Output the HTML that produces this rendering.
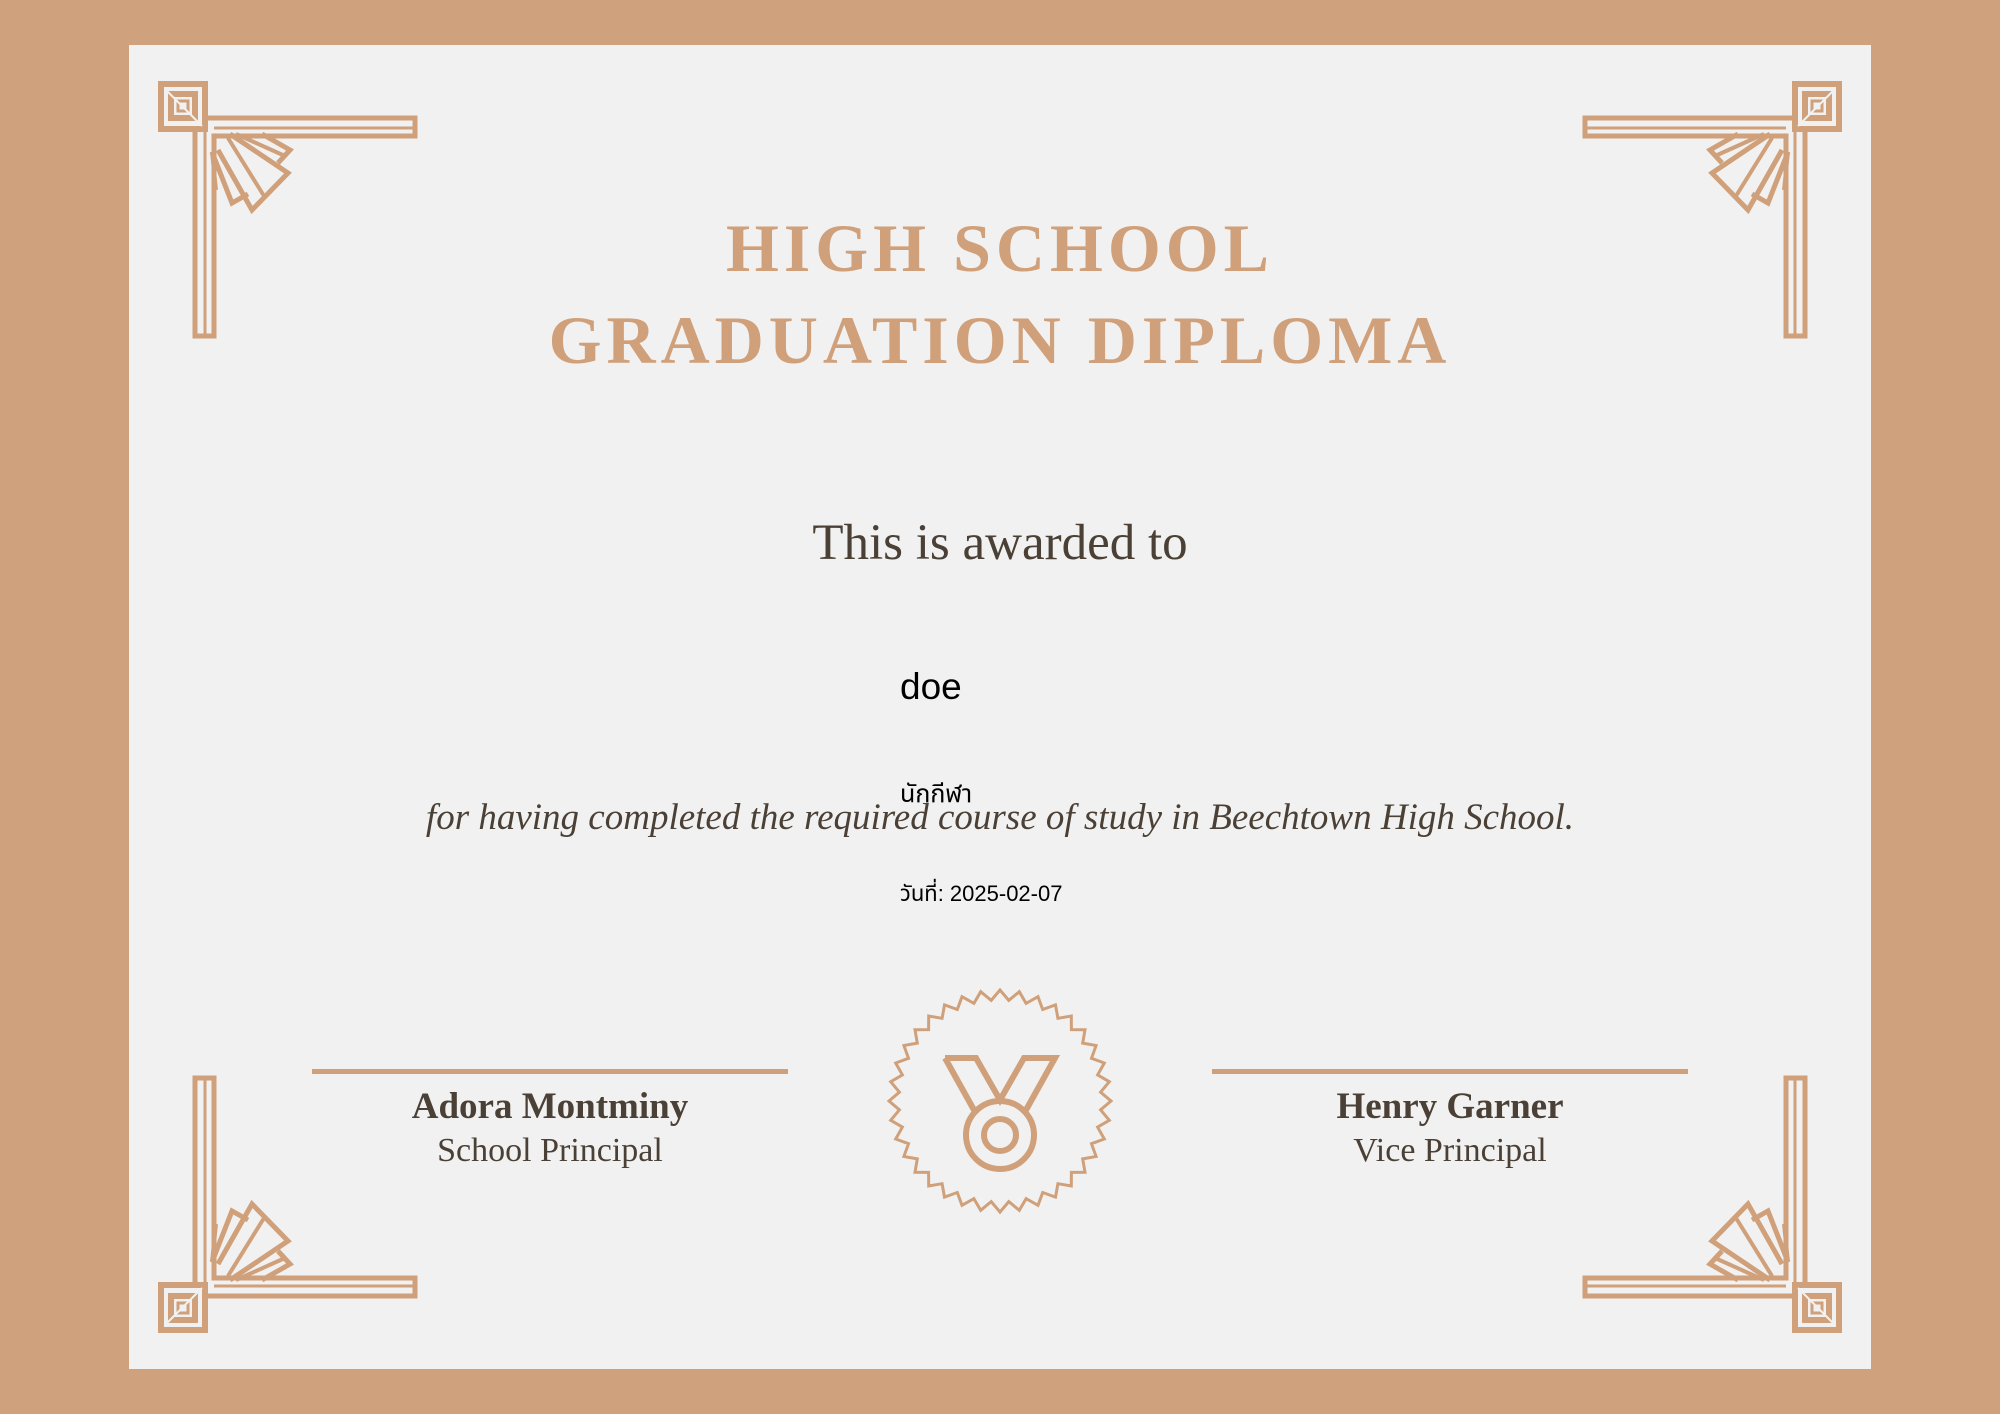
<!DOCTYPE html>
<html><head><meta charset="utf-8"><style>
body{margin:0;width:2000px;height:1414px;background:#cfa27d;position:relative;overflow:hidden;}
.panel{position:absolute;left:129px;top:45px;width:1742px;height:1324px;background:#f1f1f1;}
.t{position:absolute;left:0;width:2000px;text-align:center;white-space:nowrap;}
.serif{font-family:"Liberation Serif",serif;}
.title{color:#cfa07a;font-weight:bold;font-size:68px;letter-spacing:5px;line-height:92px;top:202px;}
.dark{color:#4a4036;}
.a{position:absolute;white-space:nowrap;font-family:"Liberation Sans","Noto Sans Thai",sans-serif;color:#000;}
</style></head><body>
<div class="panel"></div>
<svg width="2000" height="1414" style="position:absolute;left:0;top:0">
<defs>
<g id="c" fill="none" stroke="#cfa07a">
<rect x="161" y="84" width="44" height="45" stroke-width="6"/>
<rect x="171" y="94" width="24" height="24" stroke-width="6"/>
<rect x="178" y="101" width="10" height="10" stroke-width="3"/>
<line x1="167" y1="91" x2="202" y2="126" stroke="#f1f1f1" stroke-width="2"/>
<path d="M205 118 H415 V136 H214 V336 H195 V129" stroke-width="5"/>
<line x1="214" y1="128" x2="415" y2="128" stroke-width="3"/>
<line x1="205" y1="128" x2="205" y2="336" stroke-width="3"/>
<path d="M230 134 L288 173 L252 210 L218 150" stroke-width="5"/>
<path d="M262 134 L290 150 L278 163" stroke-width="5"/>
<path d="M236 134 L285 156" stroke-width="4"/>
<path d="M212 152 L232 203 L248 194" stroke-width="5"/>
<path d="M212 152 L216 190" stroke-width="4"/>
<path d="M228 138 L264 196" stroke-width="4"/>
</g>
</defs>
<use href="#c"/>
<use href="#c" transform="translate(2000,0) scale(-1,1)"/>
<use href="#c" transform="translate(0,1414) scale(1,-1)"/>
<use href="#c" transform="translate(2000,1414) scale(-1,-1)"/>
<rect x="312" y="1069" width="476" height="5" fill="#cfa07a"/>
<rect x="1212" y="1069" width="476" height="5" fill="#cfa07a"/>
<polygon id="star" fill="none" stroke="#cfa07a" stroke-width="3"/>
<g fill="none" stroke="#cfa07a" stroke-width="6" stroke-linejoin="miter">
<path d="M945 1058 H976 L1000 1100 L1024 1058 H1055 L1026 1110"/>
<path d="M974 1110 L945 1058"/>
<circle cx="1000" cy="1135" r="34"/>
<circle cx="1000" cy="1135" r="16"/>
</g>
</svg>
<script>
var p=[],n=36;for(var i=0;i<2*n;i++){var r=i%2?101:111,a=Math.PI*i/n-Math.PI/2;p.push((1000+r*Math.cos(a)).toFixed(1)+","+(1101+r*Math.sin(a)).toFixed(1));}
document.getElementById('star').setAttribute('points',p.join(' '));
</script>
<div class="t serif title">HIGH SCHOOL<br>GRADUATION DIPLOMA</div>
<div class="t serif dark" style="top:514px;font-size:51px;">This is awarded to</div>
<div class="a" style="left:900px;top:666px;font-size:37px;">doe</div>
<div class="a" style="left:900px;top:776px;font-size:25px;">นักกีฬา</div>
<div class="t serif dark" style="top:796px;font-size:37px;font-style:italic;">for having completed the required course of study in Beechtown High School.</div>
<div class="a" style="left:900px;top:878px;font-size:22px;">วันที่: 2025-02-07</div>
<div class="serif dark" style="position:absolute;left:300px;width:500px;text-align:center;top:1085px;font-size:37px;font-weight:bold;">Adora Montminy</div>
<div class="serif dark" style="position:absolute;left:300px;width:500px;text-align:center;top:1132px;font-size:34px;">School Principal</div>
<div class="serif dark" style="position:absolute;left:1200px;width:500px;text-align:center;top:1085px;font-size:37px;font-weight:bold;">Henry Garner</div>
<div class="serif dark" style="position:absolute;left:1200px;width:500px;text-align:center;top:1132px;font-size:34px;">Vice Principal</div>
</body></html>
